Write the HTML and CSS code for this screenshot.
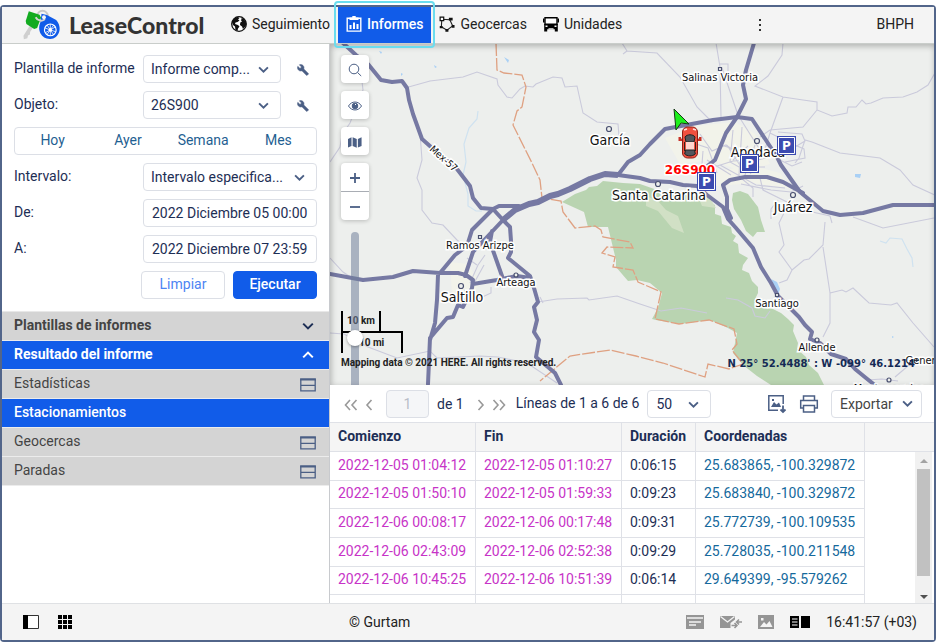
FILE: index.html
```html
<!DOCTYPE html>
<html lang="es">
<head>
<meta charset="utf-8">
<title>LeaseControl</title>
<link rel="stylesheet" href="styles.css">
</head>
<body>
<svg class="sprite" aria-hidden="true">
  <symbol id="chevron" viewBox="0 0 10 10"><path d="M1 3l4 4 4-4" fill="none" stroke="currentColor" stroke-width="1.7"/></symbol>
  <symbol id="wrench" viewBox="0 0 24 24"><path d="M22.700 19l-9.100-9.100c.9-2.300.4-5-1.500-6.900-2-2-5-2.400-7.400-1.300L9 6 6 9 1.600 4.700C.4 7.100.9 10.100 2.900 12.100c1.900 1.900 4.600 2.400 6.900 1.500l9.100 9.100c.4.4 1 .4 1.400 0l2.300-2.300c.5-.4.5-1.100.1-1.400z" fill="currentColor" stroke="currentColor"/></symbol>
  <symbol id="rows" viewBox="0 0 16 14"><path d="M.8 1.200h14.400v11.600H.8zM.8 7.300h14.400" fill="none" stroke="currentColor" stroke-width="1.300"/><path d="M.2.5h15.600v2H.2z" fill="currentColor"/></symbol>
</svg>
<div class="app">
  <header class="topbar">
    <div class="brand">
      <svg class="brand-logo" viewBox="22 9 42 34" aria-hidden="true">
        <circle cx="43" cy="17" r="5.500" fill="none" stroke="#c9c9c9" stroke-width="2"/>
        <path d="M31 25 23.500 37l.4 3.500 3.600-.8.6-3 2-1 .2-2.500 4-6z" fill="#cfcfcf"/>
        <path d="M29 12l11 3.500 1.500 3-4 10.500-3 1L26.500 25l-.7-3z" fill="#13ab20"/>
        <path d="M42 14.500l5.500 1.300 9.500 5c7 8 3 19-6 19.500-9 .3-14-9-10-17.300z" fill="#115ce9"/>
        <path d="M36 18c2 4 7 4.500 9.500 2" fill="none" stroke="#d5d5d5" stroke-width="2"/>
        <circle cx="44.500" cy="18" r="2" fill="#f4f4f4"/>
        <circle cx="51" cy="31" r="6" fill="none" stroke="#fff" stroke-width="1.200"/>
        <circle cx="51" cy="31" r="1.800" fill="#fff"/>
        <path d="M51 25v12M45.300 29l11.400 4M47.500 36l7-10M45.800 34l10.400-6M47.800 26.200l6.400 9.600" stroke="#fff" stroke-width=".8"/>
      </svg>
      <span class="brand-name">LeaseControl</span>
    </div>
    <nav class="nav">
      <a class="nav-item" href="#seguimiento">
        <svg class="nav-icon" viewBox="0 0 16 16" aria-hidden="true"><circle cx="8" cy="8" r="7.300" fill="#fff" stroke="#111" stroke-width="1.300"/><path d="M1 6l2-3.500L6.500.8l2 1.200L7 3.500l1.500 1L6.500 6l-2 .5L4 8l3 1 1.500 1.500-1.500 2L6.500 15 4.500 14 4 10.500 2 9zM10 1.500l3 1.500 2 3.500v3l-1.500 2-1.500 1.500-1-2.500-2-1.500.3-2.500L11 5.500 9.800 4l1-1z" fill="#111"/></svg>
        Seguimiento</a>
      <a class="nav-item nav-item-active" href="#informes" aria-current="page">
        <svg class="nav-icon" viewBox="0 0 16 16" aria-hidden="true"><path d="M1.200 2.200h13.600v12.900H1.200z" fill="none" stroke="#fff" stroke-width="1.400"/><path d="M3.500 4V1.500h2.800V0h3.400v1.500h2.800V4zM3.500 9h2v4h-2zM7 6.500h2V13H7zM10.500 8h2v5h-2z" fill="#fff"/></svg>
        Informes</a>
      <a class="nav-item" href="#geocercas">
        <svg class="nav-icon" viewBox="0 0 17 17" aria-hidden="true"><path d="M3 3.500 11.500 4 14.500 10.500 8.500 15 2.500 11.500z" fill="none" stroke="#222" stroke-width="1.200"/><path d="M1.200 1.200H5V5H1.200z" fill="#fff" stroke="#111" stroke-width="1.300"/><g fill="#111"><path d="M10.500 1.800h4v3h-4zM.8 10.500h3V13h-3zM13.500 9.500h3v3h-3zM6.800 13.800H10v3H6.800z"/></g></svg>
        Geocercas</a>
      <a class="nav-item" href="#unidades">
        <svg class="nav-icon" viewBox="0 0 16 16" aria-hidden="true"><path d="M2 1.700h12v6.500H2z" fill="#fff" stroke="#000" stroke-width="1.400"/><path d="M0 2.500h1.500v4H0zM14.500 2.500H16v4h-1.500zM1.200 8h13.600v5.300H1.200zM1.200 12h3v3.500h-3zM11.800 12h3v3.500h-3z" fill="#000"/><path d="M2.500 9.500h2V11h-2zM11.500 9.500h2V11h-2zM5.500 12.200h5v1.400h-5z" fill="#f4f4f4"/></svg>
        Unidades</a>
    </nav>
    <button class="more" aria-label="Más"><svg viewBox="0 0 4 14" aria-hidden="true"><path d="M1 1h2v2H1zM1 6h2v2H1zM1 11h2v2H1z" fill="#333"/></svg></button>
    <button class="account">BHPH</button>
  </header>

  <div class="workspace">
    <aside class="sidebar">
      <form class="filters">
        <label for="template">Plantilla de informe</label>
        <div class="field">
          <span class="select"><select id="template"><option>Informe comp...</option></select><svg class="chevron" aria-hidden="true"><use href="#chevron"/></svg></span>
          <button type="button" class="wrench" aria-label="Configurar plantilla"><svg aria-hidden="true"><use href="#wrench"/></svg></button>
        </div>
        <label for="unit">Objeto:</label>
        <div class="field">
          <span class="select"><select id="unit"><option>26S900</option></select><svg class="chevron" aria-hidden="true"><use href="#chevron"/></svg></span>
          <button type="button" class="wrench" aria-label="Configurar objeto"><svg aria-hidden="true"><use href="#wrench"/></svg></button>
        </div>
        <div class="presets">
          <button type="button">Hoy</button><button type="button">Ayer</button><button type="button">Semana</button><button type="button">Mes</button>
        </div>
        <label for="interval">Intervalo:</label>
        <div class="field"><span class="select"><select id="interval"><option>Intervalo especifica...</option></select><svg class="chevron" aria-hidden="true"><use href="#chevron"/></svg></span></div>
        <label for="from">De:</label>
        <input id="from" class="box" type="text" value="2022 Diciembre 05 00:00">
        <label for="to">A:</label>
        <input id="to" class="box" type="text" value="2022 Diciembre 07 23:59">
        <div class="actions">
          <button type="reset" class="btn">Limpiar</button>
          <button type="button" class="btn btn-primary">Ejecutar</button>
        </div>
      </form>
      <div class="sections">
        <button class="section section-head">Plantillas de informes<svg class="chevron" aria-hidden="true"><use href="#chevron"/></svg></button>
        <button class="section section-head section-on">Resultado del informe<svg class="chevron chevron-up" aria-hidden="true"><use href="#chevron"/></svg></button>
        <button class="section">Estadísticas<svg class="rows" aria-hidden="true"><use href="#rows"/></svg></button>
        <button class="section section-on">Estacionamientos</button>
        <button class="section">Geocercas<svg class="rows" aria-hidden="true"><use href="#rows"/></svg></button>
        <button class="section">Paradas<svg class="rows" aria-hidden="true"><use href="#rows"/></svg></button>
      </div>
    </aside>

    <main class="content">
      <div class="map">
        <svg class="map-canvas" viewBox="330 44 604 341" preserveAspectRatio="xMidYMid slice" role="img" aria-label="Mapa">
          <rect x="330" y="44" width="604" height="341" fill="#edefed"/>
          <g fill="#f2f3ea">
            <path d="M665 138l30-12 40-4 20 12 15 30-25 8-35-12-30 4zM690 165l35 5 25-5 30 8 12 16-40-6-45 4zM450 262l18 2 12 20-14 18-14-8z"/>
          </g>
          <g fill="#b9d4b1">
            <path d="M562 202l13-8 11-4 3-3 8-1 6-5 20 2 17 1 23 8 37 5 15 8 0 9 6 2 1 8 9 3 1 6 4 3-3 5 5 3 1 9 9 5-5 7-1 5 7 3 3 8 6 6 0 6-3 6L771 308l10 5 7 6 6 6-1 6 5 12-1 6 9 8 3 8 9 8 6 12h-53l-14-9-14-11-10-12 4-20-11-6-16-7-30 4-24-4-4-1 6-11 4-15-12-10-13-3-9 1-12-14 0-7-8-33-20 0-4-15z"/>
            <path d="M733 193l7-2 8 3 10 13 3 13 4 12-8 0-4 5-7-6-5-11-7-11-2-9z"/>
          </g>
          <g fill="#d1e0c5"><path d="M646 196l12 5 8 9 12 6 6 17-12-5-14-17-12-5zM696 192l14 6 6 10-14-2z"/></g>
          <g fill="#a9d0f5"><path d="M504 57l5 3-1 3zM771 279l6 3 3 7-2 6zM434 65l3 2-2 1zM379 51l3 1-1 2zM401 73l2 1-2 2zM855 174l6 0-1 4-5-1zM892 336l2 1-2 1z"/></g>
          <g fill="none" stroke="#cfe2f0" stroke-width="1.200">
            <path d="M478 111l-1 8-8 9-5 16 2 18-3 13 5 19 0 12 8 5 6 0M880 241l6 2 4-5 12 1 5 10 5 9 1 9"/>
          </g>
          <g fill="none" stroke="#cacadb" stroke-width="1.100">
            <path d="M405 88l25-7 33-4 14-5 20 7 1 6 9 12 5 1 8-9 5-3 8 1 3-3 17-7 9 1 3 9 12-1 6 27 14 9 21 2 1 12"/>
            <path d="M622 43l5 8 30 2 23 24 17 30 15 15M627 51l-4 3M716 43l4 24 1 50M722 68l16 47 22 35M720 64l8 0 0 10-9 0"/>
            <path d="M783 43l-1 12-14 21-13 10 28 11 20 3 14 2 0 8 15 6 15-3 1-6 8 0 6-7 4 4 5-1 12-5 20-1 14-5 11-7 7-12M783 97l-13 36-8 26M817 110l-14 17-33 3-10 7M778 132l24 2 3 7-15 9M812 142l28 11 40 5 20 12 13 15 22 10M812 142l-7-2-6 18-4 5M770 133l20 10 14 6 1 9-20 4M780 160l12 6 10-4"/>
            <path d="M690 142l18 6 9 25M700 134l12 17 14-6 14 10 20-5M733 130l-3 32 18 10M742 127l-3 48M721 145l28 9 26 2M714 167l19-6 25-1 22-6M727 145l14 22 24 0M703 151l-2 26M720 165l36 20 29 3M741 178l12 10 0 9M733 160l15-14M760 178l3 12 24 12M707 160l24 15M736 150l15 24M755 145l-11 33M741 184l30 6 20 2 12-6"/>
            <path d="M784 213l-5 10 5 22-5 7 13 18-5 10-8 3M792 270l12-10 5-1 14-14 2-23M823 247l7 46 0 30-7 14M830 293l12-3 4 2 7-4 16 15 22 2 6-2 16 20 21 24M853 217l30 11 51-10M808 211l22 5 2 7M778 200l-7 9 0 10"/>
            <path d="M420 133l2 27-5 18 5 12 0 20 10 13 11 2 14 15 10 8M538 302l19-3 30-1 2 2 28-4 23 8 21 7 20-3 26 5M726 298l12 2 14 8 3 8 10 2 5-7"/>
            <path d="M330 333l14 1 24 13 29 11 33-7 7 7 43-2 18 1 29 6 30 20M330 162l10-15 2-12 8-12 13-33-2-17M330 258l13 14 9 6M470 283l8-18 7-10M477 265l-10-7M473 285l11-20M464 290l12 10 15-7 0-6M867 380l15-1 16 2M895 377l20-17M540 297l3 6"/>
          </g>
          <g fill="none" stroke="#dfa182" stroke-width="1.300" stroke-dasharray="13 2">
            <path d="M496 43l1 27 7 3 18 2 4 12-4 20-5 4-4 14 19 38 8 17 2 18 19 3 2 11 12 16 20-2 6 4 2 7 27 5 3 6-26-1-5 6 13 4-2 10 20 3 5 12 23 10-6 27 24 5 30-4 25 9 3 15-5 6 11 14-14 5-21-5-3 13-42-14-27-7-26-6-40 6-30 25"/>
          </g>
          <g fill="none" stroke="#7679a3" stroke-width="4" stroke-linejoin="round" stroke-linecap="round">
            <path d="M343 43l13 12 12 9 13 16 11 2 10-1 5 7 2 12 4 14 9 25 9 8 26 22 13 17 3 12 8 10 12 1 6-3 20 0"/>
            <path d="M330 274l33 6 30-3 20-6 27 2 18 0 8 2 7 5-1 8-9 19-5-2-5 12-6 1-17 20-2 46M438 275l-1 25-2 23-5 17M440 273l15-18 12-9 5-16 21-21 10 11 7 7 1 14 0 11-3 6 22 18 4 12 4 14-4 5 3 13-3 12 5 8-3 17 19 16 6 12M503 220l-30 32-8 24M492 231l-2 11 12 34M473 284l24-4 20-4 13 2"/>
            <path d="M618 175l22 3 10 3 20 1 13 3 14 1 10 9 16 12 5 12 8 9 17 20 8 19 10 16 7 13 11 11 10 10 6 8 7 7-2 7 10 4 11 11 15 5 9 10 11 9 10 8"/>
            <path d="M618 175l10-13 12-7 10-11 15-15 48-9 24-3 15 2 25 38 4 8 19 27 23 19 17 4 23-2 30-8h42"/>
            <path d="M754 43l-8 27-3 15 3 14-9 18-11 16-11 27-9 7-6 13M723 185l7-5 15-3 22 0 16 5 20 11M723 185l4 12 0 12 4 9"/>
          </g>
          <path d="M503 220l12-10 14-6 9-2 12-6 8-2 12-5 20-10 15-5 13 1" fill="none" stroke="#7679a3" stroke-width="6" stroke-linejoin="round"/>
          <g fill="#edefed" stroke="#4a5070" stroke-width="1.200">
            <circle cx="609" cy="129" r="2.500"/><circle cx="757" cy="141" r="2.500"/><circle cx="793" cy="195" r="2.500"/><circle cx="658" cy="184" r="2.500"/><circle cx="461" cy="286" r="2.500"/><circle cx="516" cy="275" r="2"/><circle cx="817" cy="340" r="2"/><circle cx="889" cy="380" r="2"/>
            <path d="M718.500 67.500h3v3h-3zM478.500 235.500h3v3h-3zM775.500 293.500h3v3h-3z"/>
          </g>
          <g class="place place-large">
            <text x="610" y="145">García</text><text x="659" y="200">Santa Catarina</text><text x="758" y="157">Apodaca</text><text x="793" y="212">Juárez</text><text x="462" y="302">Saltillo</text>
          </g>
          <g class="place">
            <text x="720" y="81">Salinas Victoria</text><text x="480" y="249">Ramos Arizpe</text><text x="777" y="307">Santiago</text><text x="516" y="286">Arteaga</text><text x="817" y="351">Allende</text><text x="925" y="364">General</text><text x="889" y="392">Montemorelos</text>
            <text class="road-name" transform="translate(444 158) rotate(42)" y="4">Mex-57</text>
          </g>
          <path d="M674 109l15 15-8-1-5 7z" fill="#1cf01c" stroke="#163a16"/>
          <g>
            <rect x="682.500" y="127" width="15" height="31" rx="5" fill="#f0503f" stroke="#8f1e16"/>
            <path d="M681 138h-1.500v2H682M699 138h1.500v2H698" stroke="#c83228" stroke-width="2"/>
            <path d="M685 137c2-3 8-3 10 0l-1 5h-8z" fill="#53565c" stroke="#222"/>
            <path d="M686 142h8v8h-8z" fill="#ffd5cf"/>
            <path d="M685.500 150h9l.8 4c-3 2.500-8 2.500-10.600 0z" fill="#53565c" stroke="#222"/>
            <path d="M684.500 142v9M695.500 142v9" stroke="#32241f"/>
            <path d="M684 130l3-1M696 130l-3-1" stroke="#ffe1dc" stroke-width="1.500"/>
          </g>
          <text class="unit-name" x="690" y="174">26S900</text>
          <g class="pin">
            <g transform="translate(777 136)"><rect width="19" height="19"/><path d="M1.500 1.500h16v16h-16z"/><text x="9.500" y="14">P</text></g>
            <g transform="translate(740 154)"><rect width="19" height="19"/><path d="M1.500 1.500h16v16h-16z"/><text x="9.500" y="14">P</text></g>
            <g transform="translate(697 172)"><rect width="19" height="19"/><path d="M1.500 1.500h16v16h-16z"/><text x="9.500" y="14">P</text></g>
          </g>
        </svg>
        <div class="map-scale"><span class="scale-km">10 km</span><span class="scale-mi">10 mi</span></div>
        <div class="map-tools">
          <button class="tool" aria-label="Buscar"><svg viewBox="0 0 14 14" aria-hidden="true"><circle cx="6" cy="6" r="4.800"/><path d="M9.500 9.500l3.700 3.500"/></svg></button>
          <button class="tool" aria-label="Visibilidad"><svg viewBox="0 0 14 14" aria-hidden="true"><path d="M.5 7c3-5.300 10-5.300 13 0-3 5.300-10 5.300-13 0z"/><circle cx="7" cy="7" r="2.800" fill="#4b5f85"/><path d="M7 5.500h1" stroke="#fff"/></svg></button>
          <button class="tool" aria-label="Capas"><svg viewBox="0 0 16 14" aria-hidden="true"><path d="M0 3.500 4 1.500v10L0 13.200zM5.300 1.500l4.700 2v10l-4.700-2zM11.300 3.500 15.500 1.500v10l-4.200 1.900z" fill="#4b5f85" stroke="none"/></svg></button>
          <div class="zoom">
            <button aria-label="Acercar"><svg viewBox="0 0 14 14" aria-hidden="true"><path d="M2 7h10M7 2v10" stroke-width="1.800"/></svg></button>
            <button aria-label="Alejar"><svg viewBox="0 0 14 14" aria-hidden="true"><path d="M2 7h10" stroke-width="1.800"/></svg></button>
          </div>
          <input class="zoom-slider" type="range" min="0" max="100" value="40" aria-label="Nivel de zoom">
        </div>
        <div class="map-credit">Mapping data © 2021 HERE. All rights reserved.</div>
        <div class="map-coords">N 25° 52.4488' : W -099° 46.1214'</div>
      </div>

      <section class="report">
        <div class="toolbar">
          <button class="page-btn" aria-label="Primera"><svg viewBox="0 0 14 12" aria-hidden="true"><path d="M6 1 1.500 6 6 11M12.500 1 8 6l4.500 5"/></svg></button>
          <button class="page-btn page-step" aria-label="Anterior"><svg viewBox="0 0 8 12" aria-hidden="true"><path d="M6.500 1 2 6l4.500 5"/></svg></button>
          <input class="box page-input" type="text" value="1" disabled aria-label="Página">
          <span class="page-total">de 1</span>
          <button class="page-btn page-step" aria-label="Siguiente"><svg viewBox="0 0 8 12" aria-hidden="true"><path d="M1.500 1 6 6l-4.500 5"/></svg></button>
          <button class="page-btn" aria-label="Última"><svg viewBox="0 0 14 12" aria-hidden="true"><path d="M1.500 1 6 6l-4.500 5M8 1l4.500 5L8 11"/></svg></button>
          <label class="lines" for="page-size">Líneas de 1 a 6 de 6</label>
          <span class="select page-size"><select id="page-size"><option>50</option></select><svg class="chevron" aria-hidden="true"><use href="#chevron"/></svg></span>
          <button class="icon-btn push" aria-label="Guardar imagen"><svg viewBox="0 0 20 20" aria-hidden="true"><path d="M11 16.200H1.800V1.800h14.400V10" stroke-width="1.500"/><path d="M4 13l3-5 2.500 2.500L12 8.500l2 4.500zM5 5h2v2H5z" fill="#4b5f85" stroke="none"/><path d="M16 11.500V18M13.500 15.500l2.500 2.500 2.500-2.500" stroke-width="1.800"/></svg></button>
          <button class="icon-btn" aria-label="Imprimir"><svg viewBox="0 0 20 20" aria-hidden="true"><path d="M4.500 6V2h11v4M4.500 14H1.700V6.500h16.600V14h-2.800M4.500 11.500h11V18h-11z" stroke-width="1.500"/></svg></button>
          <button class="box export">Exportar<svg class="chevron" aria-hidden="true"><use href="#chevron"/></svg></button>
        </div>
        <div class="grid">
          <table class="results">
            <colgroup><col class="col-time"><col class="col-time"><col class="col-span"><col class="col-place"><col></colgroup>
            <thead><tr><th>Comienzo</th><th>Fin</th><th>Duración</th><th>Coordenadas</th><th></th></tr></thead>
            <tbody>
              <tr><td class="time">2022-12-05 01:04:12</td><td class="time">2022-12-05 01:10:27</td><td>0:06:15</td><td><a href="#m1">25.683865, -100.329872</a></td><td></td></tr>
              <tr><td class="time">2022-12-05 01:50:10</td><td class="time">2022-12-05 01:59:33</td><td>0:09:23</td><td><a href="#m2">25.683840, -100.329872</a></td><td></td></tr>
              <tr><td class="time">2022-12-06 00:08:17</td><td class="time">2022-12-06 00:17:48</td><td>0:09:31</td><td><a href="#m3">25.772739, -100.109535</a></td><td></td></tr>
              <tr><td class="time">2022-12-06 02:43:09</td><td class="time">2022-12-06 02:52:38</td><td>0:09:29</td><td><a href="#m4">25.728035, -100.211548</a></td><td></td></tr>
              <tr><td class="time">2022-12-06 10:45:25</td><td class="time">2022-12-06 10:51:39</td><td>0:06:14</td><td><a href="#m5">29.649399, -95.579262</a></td><td></td></tr>
              <tr><td></td><td></td><td></td><td></td><td></td></tr>
            </tbody>
          </table>
          <div class="scrollbar" aria-hidden="true">
            <svg viewBox="0 0 8 4"><path d="M4 0l4 4H0z" fill="#a3a3a3"/></svg>
            <span class="thumb"></span>
            <svg viewBox="0 0 8 4"><path d="M0 0h8L4 4z" fill="#505050"/></svg>
          </div>
        </div>
      </section>
    </main>
  </div>

  <footer class="statusbar">
    <div class="status-left">
      <button aria-label="Panel lateral"><svg viewBox="0 0 16 14" aria-hidden="true"><path d="M.5.5h15v13H.5z" fill="#fff" stroke="#333"/><path d="M0 0h5v14H0z"/></svg></button>
      <button aria-label="Aplicaciones"><svg viewBox="0 0 16 14" aria-hidden="true"><path d="M1 0h4v4H1zM6 0h4v4H6zM11 0h4v4h-4zM1 5h4v4H1zM6 5h4v4H6zM11 5h4v4h-4zM1 10h4v4H1zM6 10h4v4H6zM11 10h4v4h-4z"/></svg></button>
    </div>
    <span class="copyright">© Gurtam</span>
    <div class="status-right">
      <button aria-label="Notificaciones"><svg width="18" height="14" viewBox="0 0 18 14" aria-hidden="true"><path d="M0 0h18v14H0z" fill="#959595"/><path d="M1 3h16M3 7h12M3 10h7" stroke="#f4f4f4" stroke-width="1.300"/></svg></button>
      <button aria-label="Mensajes"><svg width="22" height="14" viewBox="0 0 22 14" aria-hidden="true"><path d="M0 1h15v3.500L10.500 8v5H0z" fill="#959595"/><path d="M.5 1.500 7.500 7l7-5.500" fill="none" stroke="#f4f4f4" stroke-width="1.300"/><path d="M22 7h-5M19 4.500 16.500 7 19 9.500M11.500 10.500h5M14.500 8l2.500 2.500-2.500 2.500" fill="none" stroke="#959595" stroke-width="1.500"/></svg></button>
      <button aria-label="Imágenes"><svg width="16" height="14" viewBox="0 0 16 14" aria-hidden="true"><path d="M0 0h16v14H0z" fill="#959595"/><path d="M2 12l4-5 2.500 2.500L11.500 6 14.500 12zM3 3h2.500v2.500H3z" fill="#f4f4f4"/></svg></button>
      <button aria-label="Vista dividida"><svg width="20" height="12" viewBox="0 0 20 12" aria-hidden="true"><path d="M0 0h9v12H0zM11 0h9v12h-9z"/><path d="M2 3h5.500M2 6h5.500M2 9h5.500" stroke="#fff"/></svg></button>
      <time class="clock">16:41:57 (+03)</time>
    </div>
  </footer>
</div>
</body>
</html>
```

FILE: styles.css
```css
* { box-sizing: border-box; }

body {
  display: flex;
  height: 100vh;
  margin: 0;
  padding-top: 5px;
  background: #fff;
  color: #1d2e55;
  font: 14px/20px Roboto, sans-serif;
}

button, input, select { margin: 0; color: inherit; font: inherit; }
button { padding: 0; border: 0; background: none; cursor: pointer; }
a { color: inherit; text-decoration: none; }
.sprite { position: absolute; width: 0; height: 0; }

.app {
  display: flex;
  flex: 1;
  flex-direction: column;
  min-width: 0;
  border: 2px solid #52658a;
  border-radius: 4px;
}

/* Top bar */
.topbar {
  display: flex;
  flex: 0 0 37px;
  align-items: stretch;
  border-bottom: 1px solid #c9cdca;
  background: #f4f4f4;
  color: #222;
}
.brand { display: flex; flex: 0 0 221px; align-items: center; gap: 6px; padding-left: 20px; }
.brand-logo { width: 41px; height: 34px; }
.brand-name { color: #333; font: 900 23px/34px Lato, sans-serif; }
.nav { display: flex; }
.nav-item { display: flex; align-items: center; gap: 5px; padding: 0 8px 2px; }
.nav-icon { width: 16px; height: 16px; }
.nav-item-active {
  position: relative;
  background: #115ce9;
  color: #fff;
  font-weight: 500;
}
.nav-item-active::after {
  position: absolute;
  z-index: 2;
  inset: -6px -4px -5px;
  border: 2px solid #6bdcee;
  border-radius: 4px;
  content: "";
}
.more { width: 24px; margin-left: auto; padding-bottom: 2px; }
.more svg { width: 4px; height: 14px; vertical-align: middle; }
.account { margin: 0 20px 0 104px; padding-bottom: 2px; }

.workspace { display: flex; flex: 1; min-height: 0; }

/* Sidebar */
.sidebar { flex: 0 0 328px; border-right: 1px solid #c8cace; background: #fff; }
.filters {
  display: grid;
  grid-template-columns: 129px 1fr;
  gap: 8px 0;
  padding: 11px 12px 12px;
}
.filters label { line-height: 26px; white-space: nowrap; }
.field { display: flex; }
.select { position: relative; display: flex; flex: 1; }
.select select, .box {
  width: 100%;
  height: 28px;
  padding: 0 8px;
  border: 1px solid #dcdfe6;
  border-radius: 4px;
  background: #fff;
  appearance: none;
}
.select select { padding: 0 7px; }
.chevron { width: 11px; height: 11px; color: #4b5f85; }
.select .chevron { position: absolute; top: 9px; right: 12px; pointer-events: none; }
.wrench { width: 36px; padding-left: 8px; color: #4b5f85; }
.wrench svg { width: 12px; height: 12px; vertical-align: middle; }
.presets {
  display: flex;
  grid-column: 1 / -1;
  height: 28px;
  border: 1px solid #dcdfe6;
  border-radius: 4px;
  color: #1f5f92;
}
.presets button { flex: 1; padding-bottom: 2px; }
.actions { display: flex; grid-column: 1 / -1; justify-content: flex-end; gap: 8px; }
.btn {
  width: 84px;
  height: 28px;
  padding-bottom: 2px;
  border: 1px solid #dcdfe6;
  border-radius: 4px;
  color: #4d84f3;
}
.btn-primary { border-color: #115ce9; background: #115ce9; color: #fff; font-weight: 500; }
.sections { border-top: 1px solid #e8e8e8; }
.section {
  display: flex;
  align-items: center;
  justify-content: space-between;
  width: 100%;
  height: 29px;
  padding: 0 13px 2px 12px;
  border-bottom: 1px solid #ececec;
  background: #d4d4d4;
  color: #444;
  text-align: left;
}
.section .chevron { width: 12px; height: 12px; margin: 2px 2px 0 0; color: #1d2e55; }
.section .chevron-up { color: #fff; transform: rotate(180deg); }
.section-head { font-weight: 700; }
.section-on { background: #115ce9; color: #fff; }
.section-on:not(.section-head) { font-weight: 500; }
.rows { width: 16px; height: 14px; margin-top: 3px; color: #4b5f85; }

.content { display: flex; flex: 1; flex-direction: column; min-width: 0; }

/* Map */
.map { position: relative; flex: 1; min-height: 0; overflow: hidden; background: #edefed; }
.map::after {
  position: absolute;
  inset: 0;
  box-shadow: inset 1px 2px 6px rgb(0 0 0 / 28%);
  content: "";
  pointer-events: none;
}
.map-canvas { display: block; width: 100%; height: 100%; }
.place, .unit-name {
  fill: #111;
  stroke: #fff;
  stroke-width: 3px;
  paint-order: stroke;
  text-anchor: middle;
  font: 11px "DejaVu Sans Condensed", "DejaVu Sans", sans-serif;
}
.place-large { font-size: 14px; }
.road-name { font-size: 10px; }
.unit-name { fill: #f00; font: bold 12px "DejaVu Sans", sans-serif; }
.pin rect { fill: #3b4bb0; }
.pin path { fill: none; stroke: #fff; }
.pin text { fill: #fff; font: bold 12px "DejaVu Sans", sans-serif; text-anchor: middle; }
.map-tools {
  position: absolute;
  top: 11px;
  left: 11px;
  display: flex;
  flex-direction: column;
  align-items: center;
  gap: 8px;
}
.tool, .zoom {
  width: 28px;
  border-radius: 4px;
  background: #fff;
  box-shadow: 0 1px 4px rgb(0 0 0 / 22%);
}
.tool { height: 28px; }
.map-tools svg {
  width: 14px;
  height: 14px;
  fill: none;
  stroke: #4b5f85;
  vertical-align: middle;
}
.zoom button { display: block; width: 28px; height: 28px; }
.zoom button + button { height: 29px; border-top: 1px solid #a9adb4; }
.zoom-slider {
  width: 16px;
  height: 180px;
  margin: 4px 0 0;
  appearance: none;
  background: none;
  direction: rtl;
  writing-mode: vertical-lr;
}
.zoom-slider::-webkit-slider-runnable-track {
  width: 8px;
  border-radius: 4px;
  background: rgb(113 128 155 / 55%);
}
.zoom-slider::-webkit-slider-thumb {
  width: 16px;
  height: 16px;
  margin-left: -4px;
  border-radius: 50%;
  appearance: none;
  background: #fff;
  box-shadow: 0 1px 3px rgb(0 0 0 / 35%);
}
.map-scale, .map-credit {
  color: #222;
  font: 700 10px/12px Roboto, sans-serif;
  white-space: nowrap;
}
.map-scale {
  position: absolute;
  bottom: 32px;
  left: 11px;
  width: 62px;
}
.map-scale span { display: block; height: 20px; padding: 4px; border: solid #000; }
.map-scale .scale-km { width: 40px; border-width: 0 2px; }
.map-scale .scale-mi { height: 22px; padding-left: 16px; border-width: 2px 2px 0; }
.map-credit { position: absolute; bottom: 16px; left: 11px; }
.map-coords {
  position: absolute;
  right: 16px;
  bottom: 15px;
  color: #142a55;
  font: bold 10px/12px "DejaVu Sans", sans-serif;
}

/* Report */
.report { flex: 0 0 auto; background: #fff; }
.toolbar {
  display: flex;
  align-items: center;
  height: 37px;
  padding: 0 12px 0 14px;
}
.toolbar button svg { fill: none; stroke: #4b5f85; vertical-align: middle; }
.page-btn svg { width: 14px; height: 12px; stroke-width: 1.6; }
.page-btn { margin-right: 7px; }
.page-step svg { width: 8px; }
.toolbar .page-btn svg { stroke: #999; }
.page-input { width: 43px; margin: 0 8px 0 6px; background: #f5f6f8; color: #b8bdc8; text-align: center; }
.page-total { margin-right: 13px; }
.lines { margin: 0 8px 0 3px; padding-bottom: 2px; white-space: nowrap; }
.page-size { flex: 0 0 64px; }
.page-size select { padding: 0 8px; }
.push { margin-left: auto; }
.icon-btn { margin-right: 12px; }
.icon-btn svg { width: 20px; height: 20px; }
.export { display: flex; align-items: center; justify-content: space-between; width: 91px; color: #444; }
.grid { position: relative; height: 181px; overflow: hidden; border-top: 1px solid #dfe1e7; }
.results { width: 100%; height: 201px; border-collapse: separate; border-spacing: 0; table-layout: fixed; }
.col-time { width: 146px; }
.col-span { width: 74px; }
.col-place { width: 169px; }
.results th, .results td {
  padding: 0 8px 2px;
  border: solid #dfe1e7;
  border-width: 0 1px 1px 0;
  line-height: 20px;
  text-align: left;
  white-space: nowrap;
}
.results th { height: 29px; background: #f5f5f5; font-weight: 700; }
.results th:last-child { border-right: 0; }
.results td { height: 28px; }
.results td:last-child { border: 0; }
.results .time { color: #c733c7; }
.results a { color: #15699c; }
.scrollbar {
  position: absolute;
  top: 29px;
  right: 2px;
  bottom: 0;
  display: flex;
  flex-direction: column;
  align-items: center;
  gap: 6px;
  width: 17px;
  padding: 7px 2px 4px;
  background: #f1f1f1;
}
.scrollbar svg { width: 8px; height: 4px; }
.thumb { width: 13px; height: 107px; margin-bottom: auto; background: #c1c1c1; }

/* Status bar */
.statusbar {
  display: grid;
  flex: 0 0 37px;
  grid-template-columns: 347px auto 1fr;
  align-items: center;
  border-top: 1px solid #dfe1e4;
  background: #f4f4f4;
  color: #222;
}
.status-left { display: flex; gap: 18px; padding-left: 21px; }
.status-left svg { display: block; width: 16px; height: 14px; }
.status-right { display: flex; align-items: center; justify-content: flex-end; gap: 16px; padding-right: 17px; }
.status-right svg { display: block; }
```
